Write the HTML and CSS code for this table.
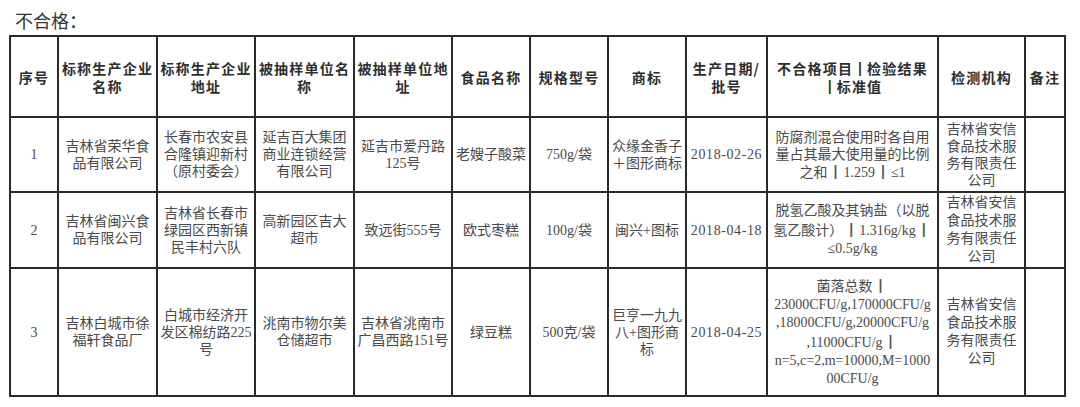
FILE: index.html
```html
<!DOCTYPE html>
<html lang="zh-CN">
<head>
<meta charset="utf-8">
<title>不合格</title>
<link rel="stylesheet" href="styles.css">
</head>
<body>
<div class="title">不合格：</div>
<div class="grid">
  <div class="cell head"><div>序号</div></div>
  <div class="cell head"><div>标称生产企业<br>名称</div></div>
  <div class="cell head"><div>标称生产企业<br>地址</div></div>
  <div class="cell head"><div>被抽样单位名<br>称</div></div>
  <div class="cell head"><div>被抽样单位地<br>址</div></div>
  <div class="cell head"><div>食品名称</div></div>
  <div class="cell head"><div>规格型号</div></div>
  <div class="cell head"><div>商标</div></div>
  <div class="cell head"><div>生产日期/<br>批号</div></div>
  <div class="cell head"><div>不合格项目<span class="bar">┃</span>检验结果<br><span class="bar">┃</span>标准值</div></div>
  <div class="cell head"><div>检测机构</div></div>
  <div class="cell head"><div>备注</div></div>

  <div class="cell"><div>1</div></div>
  <div class="cell"><div>吉林省荣华食<br>品有限公司</div></div>
  <div class="cell"><div>长春市农安县<br>合隆镇迎新村<br>（原村委会）</div></div>
  <div class="cell"><div>延吉百大集团<br>商业连锁经营<br>有限公司</div></div>
  <div class="cell"><div>延吉市爱丹路<br>125号</div></div>
  <div class="cell"><div>老嫂子酸菜</div></div>
  <div class="cell"><div>750g/袋</div></div>
  <div class="cell"><div>众缘金香子<br>＋图形商标</div></div>
  <div class="cell date"><div>2018-02-26</div></div>
  <div class="cell"><div>防腐剂混合使用时各自用<br>量占其最大使用量的比例<br>之和<span class="vb">┃</span>1.259<span class="vb">┃</span>≤1</div></div>
  <div class="cell"><div>吉林省安信<br>食品技术服<br>务有限责任<br>公司</div></div>
  <div class="cell"></div>

  <div class="cell"><div>2</div></div>
  <div class="cell"><div>吉林省闽兴食<br>品有限公司</div></div>
  <div class="cell"><div>吉林省长春市<br>绿园区西新镇<br>民丰村六队</div></div>
  <div class="cell"><div>高新园区吉大<br>超市</div></div>
  <div class="cell"><div>致远街555号</div></div>
  <div class="cell"><div>欧式枣糕</div></div>
  <div class="cell"><div>100g/袋</div></div>
  <div class="cell"><div>闽兴+图标</div></div>
  <div class="cell date"><div>2018-04-18</div></div>
  <div class="cell lh18"><div>脱氢乙酸及其钠盐（以脱<br>氢乙酸计）<span class="vb">┃</span>1.316g/kg<span class="vb">┃</span><br>≤0.5g/kg</div></div>
  <div class="cell lh18"><div>吉林省安信<br>食品技术服<br>务有限责任<br>公司</div></div>
  <div class="cell"></div>

  <div class="cell"><div>3</div></div>
  <div class="cell"><div>吉林白城市徐<br>福轩食品厂</div></div>
  <div class="cell"><div>白城市经济开<br>发区棉纺路225<br>号</div></div>
  <div class="cell"><div>洮南市物尔美<br>仓储超市</div></div>
  <div class="cell"><div>吉林省洮南市<br>广昌西路151号</div></div>
  <div class="cell"><div>绿豆糕</div></div>
  <div class="cell"><div>500克/袋</div></div>
  <div class="cell"><div>巨亨一九九<br>八+图形商<br>标</div></div>
  <div class="cell date"><div>2018-04-25</div></div>
  <div class="cell lh18"><div>菌落总数<span class="vb">┃</span><br>23000CFU/g,170000CFU/g<br>,18000CFU/g,20000CFU/g<br>,11000CFU/g<span class="vb">┃</span><br>n=5,c=2,m=10000,M=1000<br>00CFU/g</div></div>
  <div class="cell lh18"><div>吉林省安信<br>食品技术服<br>务有限责任<br>公司</div></div>
  <div class="cell"></div>
</div>
</body>
</html>
```

FILE: styles.css
```css
html, body {
  margin: 0;
  padding: 0;
  background: #ffffff;
}

.title {
  padding-top: 8px;
  margin-left: 15px;
  margin-bottom: 3px;
  font-family: "Noto Sans CJK SC", sans-serif;
  font-size: 18px;
  line-height: 24px;
  color: #333333;
}

.grid {
  display: grid;
  grid-template-columns: 46px 97px 96px 97px 96px 76px 76px 76px 79px 169px 85px 38px;
  grid-template-rows: 79px 73px 74px 126px;
  gap: 2px;
  padding: 2px;
  background: #2a2a2a;
  width: max-content;
  margin-left: 9px;
}

.cell {
  background: #ffffff;
  display: flex;
  align-items: center;
  justify-content: center;
  text-align: center;
  white-space: nowrap;
  font-family: "Liberation Serif", "Noto Sans CJK SC", serif;
  font-size: 14px;
  line-height: 17px;
  color: #4a4a4a;
}

.cell.head {
  font-family: "Noto Sans CJK SC", sans-serif;
  font-weight: 700;
  color: #2e2e2e;
  line-height: 18px;
  letter-spacing: 1.2px;
}

.cell.lh18 {
  line-height: 18px;
}

.cell.date {
  letter-spacing: 0.6px;
}

.bar {
  font-weight: 700;
  letter-spacing: 0;
}

.vb {
  font-family: "Noto Sans CJK SC", sans-serif;
  font-weight: 700;
  color: #555555;
  padding: 0 1px;
}
```
